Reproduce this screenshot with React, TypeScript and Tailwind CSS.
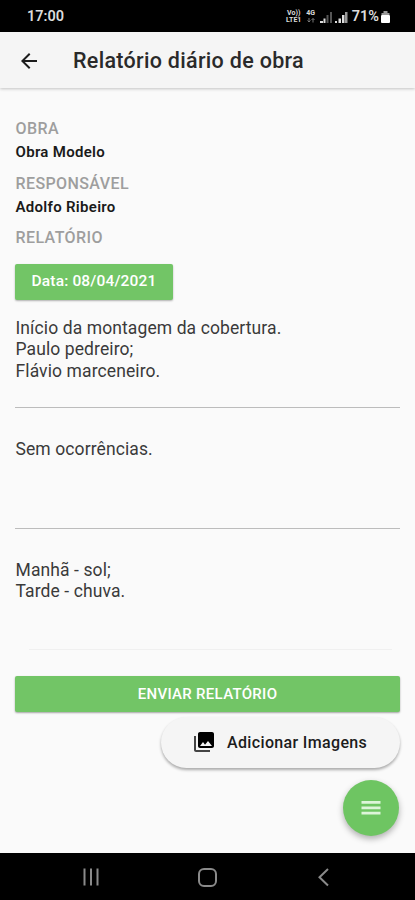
import type { ReactNode } from 'react';

function StatusBar() {
  return (
    <div className="flex h-8 shrink-0 items-center bg-black pt-[2px] pr-[25px] pl-[27px] text-[#dcdcdc]">
      <span className="text-[14.5px] leading-4 font-semibold">17:00</span>
      <div className="ml-auto flex items-center">
        <div className="mr-[4px] flex w-[16px] flex-col items-center text-[7px] font-bold">
          <span className="h-[7px] leading-[7px]">Vo))</span>
          <span className="h-[7px] leading-[7px]">LTE1</span>
        </div>
        <div className="mr-[4px] flex w-[10px] flex-col items-center">
          <span className="h-[7px] text-[7px] leading-[7px] font-bold">4G</span>
          <svg className="h-[7px] w-[8px]" viewBox="0 0 8 7" fill="none" stroke="#777">
            <path d="M2 1v4M.5 3.5L2 5l1.5-1.5M6 5.5v-4M4.5 3L6 1.5 7.5 3" />
          </svg>
        </div>
        <svg className="mr-[3px] h-3 w-3" viewBox="0 0 12 12" fill="currentColor">
          <path d="M0 10h3v2H0zM3.5 7.5h2v4.500h-2z" />
          <path d="M6.500 4h2v8h-2zM10 1h2v11h-2z" fill="#555" />
        </svg>
        <svg className="mr-[4px] h-3 w-[13px]" viewBox="0 0 13 12" fill="currentColor">
          <path d="M0 10h2v2H0zM3.500 7.500H6V12H3.500zM7 4h2.500v8H7z" />
          <path d="M10 1h2.500v11H10z" fill="#999" />
        </svg>
        <span className="text-[14.5px] leading-4 font-semibold">71%</span>
        <svg className="ml-[2px] h-[12px] w-[9px]" viewBox="0 0 9 12" fill="currentColor">
          <path d="M2.5 0h4v2h-4z" fill="#999" />
          <path d="M.5 2h8v2h-8z" fill="#999" />
          <rect y="4" width="9" height="8" rx="1" fill="#fff" />
        </svg>
      </div>
    </div>
  );
}

function AppBar() {
  return (
    <header className="z-10 flex h-14 shrink-0 items-center bg-[#f5f5f5] pl-[17px] shadow-[0_1px_3px_rgba(0,0,0,0.22)]">
      <svg className="mt-px h-6 w-6" viewBox="0 0 24 24" fill="#1c1c1c">
        <path d="M20 11H7.83l5.59-5.59L12 4l-8 8 8 8 1.41-1.41L7.83 13H20v-2z" />
      </svg>
      <h1 className="mt-px ml-[32px] text-[21.5px] leading-7 font-medium tracking-[0.3px] text-[#2a2a2a]">
        Relatório diário de obra
      </h1>
    </header>
  );
}

function Info({ label, value }: { label: string; value?: string }) {
  return (
    <div className="h-[54.5px] pl-[0.5px]">
      <div className="text-[16px] leading-[24px] font-medium tracking-[0.4px] text-[#9e9e9e]">{label}</div>
      {value && (
        <div className="text-[15px] leading-[23px] font-semibold tracking-[0.3px] text-[#1a1a1a]">{value}</div>
      )}
    </div>
  );
}

function Field({ children, className = '' }: { children: ReactNode; className?: string }) {
  return (
    <div
      className={`h-[121px] border-b pt-[31px] pl-[0.5px] text-[17.5px] leading-[21.3px] tracking-[0.1px] whitespace-pre-line text-[#3a3a3a] ${className}`}
    >
      {children}
    </div>
  );
}

function NavBar() {
  return (
    <nav className="flex h-[47px] shrink-0 items-center bg-black pl-[82px] text-[#8a8a8a]">
      <svg className="h-5 w-[18px]" viewBox="0 0 18 20" stroke="currentColor" strokeWidth="2">
        <path d="M2.5 1.5v17M9 1.5v17M15.5 1.5v17" />
      </svg>
      <svg className="ml-[97px] h-5 w-5" viewBox="0 0 20 20" fill="none" stroke="currentColor" strokeWidth="2">
        <rect x="2" y="2" width="17" height="17" rx="5" />
      </svg>
      <svg className="ml-[100px] h-5 w-3" viewBox="0 0 12 20" fill="none" stroke="currentColor" strokeWidth="2">
        <path d="M11 2L2.5 10.2l8.5 8.3" />
      </svg>
    </nav>
  );
}

export default function App() {
  return (
    <div className="flex h-[900px] w-[415px] flex-col overflow-hidden bg-[#fafafa] font-['Roboto',sans-serif]">
      <StatusBar />
      <AppBar />
      <main className="flex min-h-0 flex-1 flex-col px-[15px] pt-[29px]">
        <Info label="OBRA" value="Obra Modelo" />
        <Info label="RESPONSÁVEL" value="Adolfo Ribeiro" />
        <div className="h-[38px]">
          <Info label="RELATÓRIO" />
        </div>
        <button className="h-9 w-[158px] shrink-0 rounded-[2px] bg-[#72c566] text-[15.5px] font-medium tracking-[0.15px] text-white shadow-[0_1px_2px_rgba(0,0,0,0.3)]">
          Data: 08/04/2021
        </button>
        <Field className="-mt-[13px] border-[#bcbcbc]">
          {'Início da montagem da cobertura.\nPaulo pedreiro;\nFlávio marceneiro.'}
        </Field>
        <Field className="border-[#bcbcbc]">Sem ocorrências.</Field>
        <Field className="border-transparent">{'Manhã - sol;\nTarde - chuva.'}</Field>
        <hr className="-mt-px mr-[8px] ml-[14px] border-[#f0f0f0]" />
        <button className="z-10 mt-[26px] h-9 w-[385px] shrink-0 rounded-[2px] bg-[#72c566] text-[15px] font-medium tracking-[0.3px] text-white shadow-[0_1px_2px_rgba(0,0,0,0.35)]">
          ENVIAR RELATÓRIO
        </button>
        <div className="flex flex-col items-end">
          <button className="mt-[5px] flex h-[51px] w-[239px] items-center rounded-full bg-[#f5f5f5] pl-[31px] text-[16px] font-medium tracking-[0.35px] text-[#1c1c1c] shadow-[0_2px_3px_rgba(0,0,0,0.32)]">
            <svg className="mr-[11px] mb-[2px] h-6 w-6" viewBox="0 0 24 24">
              <path d="M22 16V4c0-1.1-.9-2-2-2H8c-1.1 0-2 .9-2 2v12c0 1.1.9 2 2 2h12c1.1 0 2-.9 2-2zm-11-4l2.03 2.71L16 11l4 5H8l3-4z" />
              <path d="M2 6v14c0 1.1.9 2 2 2h14v-2H4V6H2z" fill="#444" />
            </svg>
            Adicionar Imagens
          </button>
          <button className="mt-[12px] mr-px flex h-14 w-14 items-center justify-center rounded-full bg-[#6ec562] shadow-[0_3px_6px_rgba(0,0,0,0.3)]">
            <svg className="h-6 w-6" viewBox="0 0 24 24" fill="#ddf5d9">
              <path d="M2.5 5h19v2.8h-19zM2.5 10.400h19v2.800h-19zM2.500 15.800h19v2.800h-19z" />
            </svg>
          </button>
        </div>
      </main>
      <NavBar />
    </div>
  );
}
